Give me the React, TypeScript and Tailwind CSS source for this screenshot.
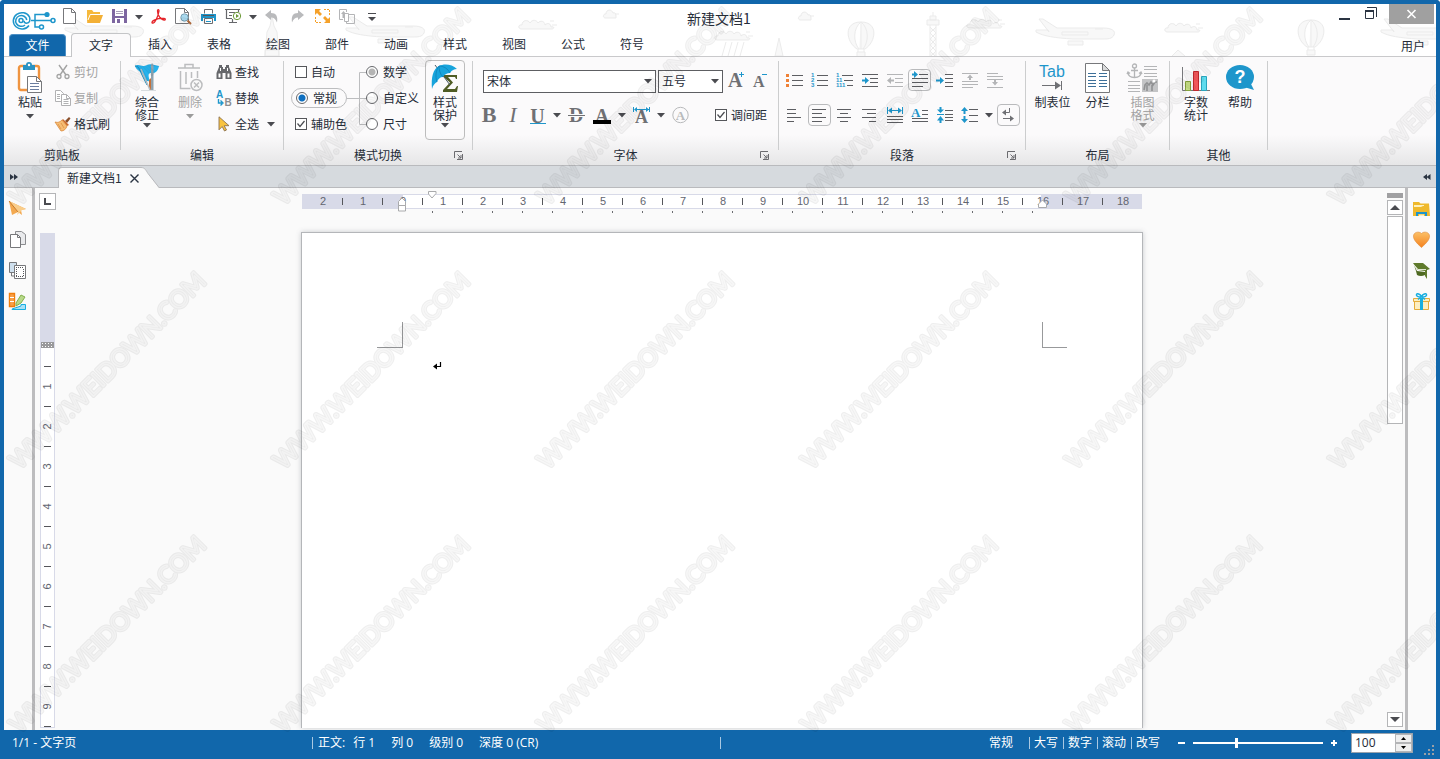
import React, { useState } from "react";

type Kids = { children?: React.ReactNode };

const GREY = "#6f7074";
const BLUE = "#1e96cb";

/* ---------- shared pieces ---------- */

function Svg({ w, h = w, children, className = "" }: Kids & { w: number; h?: number; className?: string }) {
  return (
    <svg width={w} height={h} viewBox={`0 0 ${w} ${h}`} fill="none" aria-hidden="true" className={`block shrink-0 overflow-visible ${className}`}>
      {children}
    </svg>
  );
}

function Caret({ color = "#4a4b50" }: { color?: string }) {
  return (
    <Svg w={8} h={6}>
      <path d="M0 1h8L4 5.500z" fill={color} />
    </Svg>
  );
}

function IconButton({ label, className = "w-[25px]", children }: Kids & { label: string; className?: string }) {
  return (
    <button type="button" aria-label={label} title={label} className={`flex h-[26px] shrink-0 items-center justify-center ${className}`}>
      {children}
    </button>
  );
}

function BigButton({
  icon,
  lines,
  caret,
  disabled,
  framed,
  className = "w-10",
}: {
  icon: React.ReactNode;
  lines: string[];
  caret?: boolean;
  disabled?: boolean;
  framed?: boolean;
  className?: string;
}) {
  return (
    <button
      type="button"
      disabled={disabled}
      className={`mt-[3px] flex h-20 shrink-0 flex-col items-center rounded border ${framed ? "border-[#bdbdbd]" : "border-transparent"} ${disabled ? "text-[#a3a3a3]" : ""} ${className}`}
    >
      <span className="flex h-[34px] items-center justify-center">{icon}</span>
      {lines.map((l) => (
        <span key={l} className="block leading-[13px] whitespace-nowrap">
          {l}
        </span>
      ))}
      {caret && (
        <span className={lines.length === 1 ? "mt-[5px]" : "mt-px"}>
          <Caret color={disabled ? "#9b9b9b" : undefined} />
        </span>
      )}
    </button>
  );
}

function SmallButton({ icon, label, disabled, caret }: { icon: React.ReactNode; label: string; disabled?: boolean; caret?: boolean }) {
  return (
    <button type="button" disabled={disabled} className={`flex h-[26px] items-center gap-[3px] whitespace-nowrap ${disabled ? "text-[#a3a3a3]" : ""}`}>
      {icon}
      {label}
      {caret && (
        <span className="ml-[5px]">
          <Caret />
        </span>
      )}
    </button>
  );
}

function Group({ label, width, launcher, children }: Kids & { label: string; width: string; launcher?: boolean }) {
  return (
    <>
      <section aria-label={label} className={`flex shrink-0 flex-col ${width}`}>
        <div className="flex h-[88px]">{children}</div>
        <div className="relative flex h-5 items-center justify-center">
          {label}
          {launcher && (
            <button type="button" aria-label={`${label} 设置`} className="absolute top-[6px] right-[9px]">
              <Svg w={9}>
                <path d="M.5 7V.5H8M8.500 3v5.500H3M3.500 3.500l3.500 3.500M7 4v3H4" stroke="#6b6b6f" />
              </Svg>
            </button>
          )}
        </div>
      </section>
      <div className="mt-1 mb-[15px] w-px shrink-0 bg-[#cccdce]" />
    </>
  );
}

function Check({ label, defaultChecked }: { label: string; defaultChecked?: boolean }) {
  return (
    <label className="flex h-[26px] items-center gap-1 whitespace-nowrap">
      <span className="grid size-[12px] shrink-0">
        <input type="checkbox" defaultChecked={defaultChecked} className="peer col-start-1 row-start-1 m-0 size-[12px] appearance-none border border-[#55565a] bg-white" />
        <svg viewBox="0 0 12 12" className="pointer-events-none col-start-1 row-start-1 hidden size-[12px] peer-checked:block" fill="none" aria-hidden="true">
          <path d="M2.500 5.500l2.500 3 4.500-5.500" stroke="#4a4b50" strokeWidth="1.200" />
        </svg>
      </span>
      {label}
    </label>
  );
}

function Radio({ label, name, defaultChecked, soft }: { label: string; name: string; defaultChecked?: boolean; soft?: boolean }) {
  return (
    <label className="flex items-center gap-[5px] whitespace-nowrap">
      <input
        type="radio"
        name={name}
        defaultChecked={defaultChecked}
        className={`m-0 size-3 shrink-0 appearance-none rounded-full border border-[#66676b] bg-white ${
          soft ? "checked:bg-[radial-gradient(circle,#b4b4b4_3px,#ffffff_4px)]" : "checked:bg-[radial-gradient(circle,#0f6fc0_3px,#ffffff_4px)]"
        }`}
      />
      {label}
    </label>
  );
}

function Serif({ children, className = "" }: Kids & { className?: string }) {
  return <span className={`font-['Liberation_Serif',serif] leading-none font-bold text-[#6f7074] ${className}`}>{children}</span>;
}

/* ---------- header ---------- */

function Cloud({ x, y, s = 1 }: { x: number; y: number; s?: number }) {
  return (
    <path
      transform={`translate(${x} ${y}) scale(${s})`}
      d="M2 10c-4-1-2-5 1-4 0-5 6-6 8-2 2-4 7-3 8 0 2-3 7-2 7 2 3-3 6-1 6 2 4-1 3 2 1 2zM31 2h4M33 6h5"
    />
  );
}

function Puff({ x, y }: { x: number; y: number }) {
  return <path transform={`translate(${x} ${y})`} d="M2 8c-3-1-1-5 1-4 0-5 6-5 7-1 3-1 3 2 3 5zM12 4h4" />;
}

function Plane({ x, y }: { x: number; y: number }) {
  return (
    <path
      transform={`translate(${x} ${y})`}
      d="M14 13L4 0h4l14 9h46c9 0 13 3 11 7s-6 4-12 4H38C20 19 8 17 1 13v-2h12zM27 13h26v3H27zM33 22h15v4H33zM60 10h8"
    />
  );
}

function Balloon({ x, y }: { x: number; y: number }) {
  return (
    <path
      transform={`translate(${x} ${y})`}
      d="M13 0c18 0 15 20 4 27h-8C-2 20-5 0 13 0zM13 0c-8 6-8 20-2 27M13 0c8 6 8 20 2 27M13 0v27M9 30h8v5H9zM10 27v3M16 27v3"
    />
  );
}

function Tower({ x }: { x: number }) {
  return <path transform={`translate(${x} 12)`} d="M6 0v4M3 4h6v4H3zM0 8h12v5H0zM3 13v31M9 13v31M3 15l6 6-6 6 6 6-6 6 6 6M9 15l-6 6 6 6-6 6 6 6-6 6" />;
}

function Doodles() {
  return (
    <svg className="pointer-events-none absolute top-0 -left-1 h-full w-[1440px]" viewBox="0 4 1440 52" preserveAspectRatio="xMinYMin slice" fill="#f8f8f8" stroke="#ebebeb" aria-hidden="true">
      <Plane x={64} y={17} />
      <Plane x={345} y={17} />
      <path d="M265 56l2-24 3-6 2-10 2 10 3 6 2 24zM265 56v-6h14v6M267 40h10" />
      <Cloud x={519} y={19} />
      <Puff x={603} y={10} />
      <Cloud x={715} y={30} />
      <path d="M726 42l-4 14M732 42l-4 14M738 42l-4 14M744 42l-4 14" fill="none" />
      <path d="M775 56l4-18 4 18z" />
      <Puff x={798} y={12} />
      <Balloon x={848} y={22} />
      <Tower x={927} />
      <Cloud x={967} y={18} />
      <Plane x={1035} y={19} />
      <Cloud x={1165} y={22} />
      <path d="M1172 56l6-6 7 6" />
      <Balloon x={1298} y={20} />
      <Plane x={1380} y={19} />
    </svg>
  );
}

function Logo() {
  return (
    <Svg w={44} h={19}>
      <g stroke="#1e96cb" strokeWidth="1.500">
        <path d="M17 14.500A8.600 8.200 0 1 1 17.500 6c1 3 .4 6.200-3 6.200-2 0-2.500-1-2.500-2.400" />
        <path d="M13 14a5.600 5.400 0 1 1 1.800-5" />
        <circle cx="9" cy="9.500" r="2" />
        <path d="M19 9.500h20M23 9.500V3.500h10M23 9.500v6.500h4" />
        <circle cx="41" cy="9.500" r="2" />
        <circle cx="29.500" cy="16" r="2" />
      </g>
      <circle cx="35" cy="3.500" r="2.600" fill="#1e96cb" />
    </Svg>
  );
}

const quick: [string, React.ReactNode, string?][] = [
  ["新建", <Svg w={15} h={18}><path d="M1.500.5h8l4 4v11h-12z" fill="#fff" stroke="#77787b" /><path d="M9.500.5v4h4" stroke="#77787b" /></Svg>],
  ["打开", <Svg w={17} h={14}><path d="M1 12V0h5l1.500 2H14v3" fill="#f6b93c" /><path d="M1 13L4 5h13l-3 8z" fill="#f3b035" /><path d="M2 10l2.200-5.500H15" stroke="#fff" /></Svg>],
  ["保存", <Svg w={15} h={16}><path d="M0 0h15v14H0z" fill="#7d66a0" /><path d="M3 0h9v7H3z" fill="#fff" /><path d="M4 2h7v1H4zM4 4h7v1H4z" fill="#a9a0b8" /><path d="M3 9h9v5H3z" fill="#fff" /><path d="M5 10h3v4H5z" fill="#7d66a0" /></Svg>],
  ["保存选项", <Caret />, "w-[14px]"],
  ["导出 PDF", <Svg w={15} h={16}><path d="M1 13.500c0-2 5-4.500 12-4 2 .2 1.500 1.700 0 1.500C10 10.500 6.500 7 6.500 2c0-2 1.700-1.500 1.500 0C7.500 6 4 14.500 1.700 14.200 1.200 14.200 1 14 1 13.500z" stroke="#e5252a" strokeWidth="1.300" /></Svg>],
  ["打印预览", <Svg w={17} h={18}><path d="M.5.5h9l4 4v11H.5z" fill="#fff" stroke="#77787b" /><path d="M9.500.5v4h4" stroke="#77787b" /><circle cx="9.500" cy="9.500" r="3.700" fill="#a9d9ee" stroke="#77a0b4" /><path d="M12.500 12.500l3.500 3.500" stroke="#b06a3b" strokeWidth="2" /></Svg>],
  ["打印", <Svg w={15} h={16}><path d="M3.500 4.500v-4h8v4" fill="#fff" stroke="#6c6d70" /><path d="M0 5h15v7h-2V9H2v3H0z" fill={BLUE} /><path d="M2 6h11v1H2z" fill="#55565a" /><path d="M3.500 9.500h8v5h-8z" fill="#fff" stroke="#6c6d70" /><path d="M5 12.500h5" stroke={BLUE} /></Svg>],
  ["演示", <Svg w={17} h={16}><path d="M0 .5h15M1.500 1v8.500H7M13.500 1v2M4 3.500h6M4 6.500h3M7.500 10v3M4 13.500h8" stroke="#66676b" strokeWidth="1.200" /><circle cx="12" cy="7" r="3.700" fill="#fff" stroke="#6d9a3a" /><path d="M11 5l3 2-3 2z" fill="#6d9a3a" /></Svg>],
  ["演示选项", <Caret />, "w-[14px]"],
  ["撤销", <Svg w={15} h={14}><path d="M0 5l6-5v3c5 0 7 3 6 9.500C10.500 9 9 7.500 6 7.500V10z" fill="#b9babc" /></Svg>],
  ["重做", <Svg w={15} h={14}><path d="M14 5L8 0v3C3 3 1 6 2 12.500 3.500 9 5 7.500 8 7.500V10z" fill="#b9babc" /></Svg>],
  ["全屏", <Svg w={15} h={16}><path d="M0 0h6L4 2l3 3-2 2-3-3-2 2zM15 14H9l2-2-3-3 2-2 3 3 2-2z" fill="#f5a12a" /><path d="M9 .5h5.500V6M.5 8v5.500H6" stroke="#f5a12a" strokeDasharray="2 1" /></Svg>],
  ["粘贴选项", <Svg w={17} h={16}><path d="M4 10.500H.5v-10h7V3M5.500 4.500v8h4v-8zM9.500 5.500h6v9h-8V12" stroke="#b4b5b7" /><path d="M2 5l2.500-3L7 5H5.500v4h-2V5z" fill="#b4b5b7" /></Svg>],
  ["自定义快速访问栏", <Svg w={9} h={10}><path d="M0 1.500h8" stroke="#4a4b50" /><path d="M0 5h8L4 9z" fill="#4a4b50" /></Svg>],
];

function Header() {
  const tabs = ["插入", "表格", "绘图", "部件", "动画", "样式", "视图", "公式", "符号"];
  return (
    <header className="relative bg-white">
      <Doodles />
      <div className="relative flex h-[29px]">
        <div className="flex flex-1 basis-0 items-start">
          <div className="w-[53px] pt-[7px] pl-2">
            <Logo />
          </div>
          {quick.map(([label, icon, w]) => (
            <IconButton key={label} label={label} className={w}>
              {icon}
            </IconButton>
          ))}
        </div>
        <h1 className="self-center pb-px text-sm leading-5">新建文档1</h1>
        <div className="flex flex-1 basis-0 items-start justify-end pr-[2px]">
          <IconButton label="最小化">
            <Svg w={11} h={12}><path d="M0 7h11v2H0z" fill="#2a3442" /></Svg>
          </IconButton>
          <IconButton label="还原" className="w-7">
            <Svg w={14} className="-mt-2"><path d="M3 1.500h9.500V11" stroke="#2a3442" /><path d="M1.500 4.500h8v8h-8z" stroke="#2a3442" /><path d="M1 4h9v2H1z" fill="#2a3442" /></Svg>
          </IconButton>
          <button type="button" aria-label="关闭" className="ml-1 flex h-5 w-[45px] items-center justify-center bg-[#a0a0a0]">
            <Svg w={9} h={10}><path d="M.5 1l8 8M8.500 1l-8 8" stroke="#fff" strokeWidth="1.600" /></Svg>
          </button>
        </div>
      </div>
      <nav className="relative flex h-[23px] pl-[5px]">
        <button type="button" className="mt-px mr-[5px] flex w-[57px] items-center justify-center rounded-t border-x border-t border-[#4d8fc4] bg-[#1167ab] pb-px text-white">文件</button>
        <button type="button" aria-current="page" className="z-10 -mb-px flex w-[60px] items-center justify-center rounded-t border-x border-t border-[#c4c5c7] bg-[#fbfafb] pb-[2px]">文字</button>
        {tabs.map((t) => (
          <button key={t} type="button" className="flex w-[59px] items-center justify-center pr-px pb-px">
            {t}
          </button>
        ))}
        <button type="button" className="mt-[3px] mr-[11px] ml-auto">用户</button>
      </nav>
    </header>
  );
}

/* ---------- ribbon icons ---------- */

const pasteIcon = (
  <Svg w={26} h={32}>
    <rect x="2" y="4" width="20" height="24" rx="2" fill="#fff" stroke="#ef9440" strokeWidth="2.400" />
    <path d="M6 3h3a3 3 0 0 1 6 0h3v5H6z" fill="#2a93c4" />
    <circle cx="12" cy="3" r="1.200" fill="#fff" />
    <path d="M10.500 14.500h9l5 5v11h-14z" fill="#fff" stroke="#77787b" />
    <path d="M19.500 14.500v5h5" stroke="#77787b" />
    <path d="M13 21.500h9M13 24.500h9M13 27.500h9" stroke="#6b7ea0" />
  </Svg>
);

const flagIcon = (
  <Svg w={26} h={30}>
    <path d="M1 3c5-3 6 2 12-1 3-2 8 0 12 1-1 6-5 8-8 7-4 0-2 5-1 8-5 1-6-3-7-6C7 8 3 8 1 3z" fill="#25b3ee" />
    <path d="M1 3c4 0 4 3 7 9l5 10" stroke="#1489bd" />
    <path d="M15 17l2-2h2v13h-4z" fill="#c4713a" />
    <path d="M17 2l1-2 1.500 2v26H17z" fill="#8fa3b0" />
    <path d="M7 6l9 21" stroke="#b4bec5" strokeWidth="1.500" />
    <path d="M7 27.500h15" stroke="#d8dcdf" />
  </Svg>
);

const trashIcon = (
  <Svg w={26} h={30}>
    <g stroke="#bcbdbf" strokeWidth="1.500">
      <path d="M1 5h22M8 5V1.500h8V5M3.500 8v17.500h10M20.500 8v7M9 9v12M14.500 9v6" />
      <circle cx="19.500" cy="22" r="5.500" fill="#fafafa" />
      <path d="M17 19.500l5 5M22 19.500l-5 5" />
    </g>
  </Svg>
);

const umbrellaIcon = (
  <Svg w={30} h={32}>
    <path d="M13 13h14v4h-1l-1-2h-7l5 5.500-6 6.500h8l2-3h1l-1 6H13v-2l7-7.500-7-6z" fill="#4f5c24" />
    <path d="M5 3l15 20" stroke="#4a5a66" />
    <path d="M2 27C1 15 3 7 9 4c5-2.500 13-2 18 3-3 0-5 1-7 4-3 0-5 1-7 4-3 0-5 2-6 5-2 1-4 3-5 7z" fill="#18a4dc" />
    <path d="M20 11C18 7 14 4 9 4c0 4 1 8 4 11M7 20C5 14 6 8 9 4" stroke="#0d82b8" strokeWidth=".8" />
  </Svg>
);

const tabIcon = (
  <Svg w={31} h={30}>
    <text x="15" y="14" textAnchor="middle" fontFamily="Liberation Sans, sans-serif" fontSize="16" fill={BLUE}>Tab</text>
    <path d="M5 22.500h16" stroke={GREY} />
    <path d="M18 18.500l6 4-6 4z" fill={GREY} />
    <path d="M24.500 18v9" stroke={GREY} />
  </Svg>
);

const columnsIcon = (
  <Svg w={25} h={30}>
    <path d="M.5.5h17l7 7v22H.5z" fill="#fff" stroke="#77787b" />
    <path d="M17.500.5v7h7z" fill="#d9dadb" stroke="#77787b" />
    <path d="M3 10.500h8M3 13.500h8M3 17.500h8M3 20.500h8M3 23.500h8M14 10.500h8M14 13.500h8M14 17.500h8M14 20.500h8M14 23.500h8" stroke="#3c6f99" />
  </Svg>
);

const anchorIcon = (
  <Svg w={31} h={30}>
    <g stroke="#b4b5b7" strokeWidth="1.300">
      <circle cx="7.500" cy="3" r="2" />
      <path d="M7.500 5v9M4 7.500h7M1 9c0 4 3 5.500 6.500 5.500S14 13 14 9M0 11l1-2 2 1.500M15 11l-1-2-2 1.500" />
    </g>
    <path d="M17 3.500h13M17 6.500h13M17 10.500h13M17 13.500h13M1 18.500h12M1 22.500h12M1 25.500h12M1 28.500h12" stroke="#b4b5b7" />
    <path d="M15 16h16v13H15z" fill="#c3c4c6" />
    <path d="M17 27l1-5 2-2 2 2 2-3 2 3 2-3h2M20 22v6M25 22v6" stroke="#909193" strokeWidth="1.600" />
    <circle cx="27" cy="18" r="1.500" fill="#fff" />
  </Svg>
);

const chartIcon = (
  <Svg w={28} h={28}>
    <path d="M.5 3v23.500H28" stroke="#77787b" />
    <path d="M3.500 17.500h5v9h-5z" fill="#c5dd84" stroke="#86a33c" />
    <path d="M11.500 7.500h5v19h-5z" fill="#f2575a" stroke="#c2282d" />
    <path d="M19.500 12.500h5v14h-5z" fill="#5fdcee" stroke="#2aa5be" />
  </Svg>
);

const helpIcon = (
  <Svg w={28}>
    <ellipse cx="14" cy="13" rx="14" ry="12" fill={BLUE} />
    <path d="M18 23l10 3-4-8z" fill={BLUE} />
    <text x="14" y="19" textAnchor="middle" fontFamily="Liberation Sans, sans-serif" fontWeight="bold" fontSize="18" fill="#fff">?</text>
  </Svg>
);

const scissors = (
  <Svg w={16}><path d="M4 1l7 10M12 1L5 11" stroke="#a3a3a3" strokeWidth="1.400" /><circle cx="4" cy="12.500" r="2" stroke="#a3a3a3" strokeWidth="1.300" /><circle cx="12" cy="12.500" r="2" stroke="#a3a3a3" strokeWidth="1.300" /></Svg>
);
const copy = (
  <Svg w={16}><path d="M.5.500h5l3 3v8h-8z" fill="#fff" stroke="#b1b1b3" /><path d="M6.500 4.500h5l4 4v7h-9z" fill="#fff" stroke="#b1b1b3" /><path d="M2 4.500h3M2 6.500h3M2 8.500h3M8.500 9.500h5M8.500 11.500h5M8.500 13.500h5M11.500 4.500v4h4" stroke="#b1b1b3" /></Svg>
);
const brush = (
  <Svg w={16}><path d="M10 5l4-4 1.500 1.500L12 7z" fill="#8a4f2b" /><path d="M8 3l6 6-2 1-5-6z" fill="#c9692c" /><path d="M7 4l5 6c-1 3-3 5-6 5L0 6c3 1 5 0 7-2z" fill="#f6bd74" stroke="#d98a3d" strokeWidth=".8" /><path d="M3 8l3 5M6 7l3 5" stroke="#d98a3d" strokeWidth=".7" /></Svg>
);
const binoculars = (
  <Svg w={16}><path d="M3 1h3v2h1v2h2V3h1V1h3v2l2.500 6v6H9.500V9h-3v6H.5V9L3 3z" fill="#66676b" /><path d="M2.500 9.500h2v4h-2zM11.500 9.500h2v4h-2zM4 4h1v3H4zM11 4h1v3h-1z" fill="#fff" /></Svg>
);
const replace = (
  <Svg w={16}>
    <text x="0" y="8" fontFamily="Liberation Sans, sans-serif" fontWeight="bold" fontSize="10" fill={BLUE}>A</text>
    <text x="8.500" y="15.500" fontFamily="Liberation Sans, sans-serif" fontWeight="bold" fontSize="10" fill="#8b8c8f">B</text>
    <path d="M2.500 9v4H6M4.500 10.500L7 13l-2.500 2.500" stroke={BLUE} strokeWidth="1.400" />
  </Svg>
);
const pointer = (
  <Svg w={16}><path d="M3 .8v13l3.200-3.300L8.500 15l2-1-2.300-4.300H13z" fill="#f9c440" stroke="#8d7350" strokeWidth=".9" /></Svg>
);

/* Paragraph glyphs share a 17x18 box with strokes on whole pixels. */
function Para({ d, soft, children }: Kids & { d: string; soft?: boolean }) {
  return (
    <Svg w={17} h={18}>
      <path d={d} stroke={soft ? "#b4b5b7" : "#5d5e62"} />
      {children}
    </Svg>
  );
}

const numText = (rows: string[]) =>
  rows.map((r, i) => (
    <text key={r} x="0" y={6 + i * 5} fontFamily="Liberation Sans, sans-serif" fontWeight="bold" fontSize="6" fill={BLUE}>
      {r}
    </text>
  ));

const paraTop: [string, React.ReactNode, boolean?][] = [
  ["项目符号", <Para d="M6 4.500h11M6 9.500h11M6 14.500h11"><path d="M0 3h3v3H0zM0 8h3v3H0zM0 13h3v3H0z" fill="#ef8136" /></Para>],
  ["编号", <Para d="M6 4.500h11M6 9.500h11M6 14.500h11">{numText(["1", "2", "3"])}</Para>],
  ["多级编号", <Para d="M6 4.500h11M8 9.500h9M11 14.500h6">{numText(["1", "11", "111"])}</Para>],
  ["增加缩进", <Para d="M1 3.500h16M9 7.500h8M9 11.500h8M1 15.500h16"><path d="M1 8.500h3V6l4 3.500L4 13v-2.500H1z" fill={BLUE} /></Para>],
  ["减少缩进", <Para soft d="M1 3.500h16M9 7.500h8M9 11.500h8M1 15.500h16"><path d="M8 8.500H5V6L1 9.500 5 13v-2.500h3z" fill="#b4b5b7" /></Para>],
  ["首行缩进", <Para d="M8 3.500h9M1 7.500h16M1 11.500h16M1 15.500h11"><path d="M1 2.500h2V0l4 3.500L3 7V4.500H1z" fill={BLUE} /></Para>, true],
  ["悬挂缩进", <Para d="M9 3.500h8M9 7.500h8M9 11.500h8M9 15.500h8"><path d="M0 8.500h4V6l4 3.500L4 13v-2.500H0z" fill={BLUE} /></Para>],
  ["段前间距", <Para soft d="M1 2.500h16M1 10.500h16M1 13.500h16M1 16.500h11"><path d="M8 9V7H6l3-3.500L12 7h-2v2z" fill="#b4b5b7" /></Para>],
  ["段后间距", <Para soft d="M1 2.500h11M1 5.500h16M1 8.500h16M1 16.500h16"><path d="M8 9v2H6l3 3.500 3-3.500h-2V9z" fill="#b4b5b7" /></Para>],
];

const paraBottom: [string, React.ReactNode, boolean?][] = [
  ["左对齐", <Para d="M1 3.500h9M1 7.500h9M1 11.500h14M1 15.500h7" />],
  ["两端对齐", <Para d="M1 3.500h14M1 7.500h10M1 11.500h14M1 15.500h10" />, true],
  ["居中", <Para d="M1 3.500h14M4 7.500h8M1 11.500h14M4 15.500h8" />],
  ["右对齐", <Para d="M1 3.500h14M6 7.500h9M1 11.500h14M8 15.500h7" />],
  ["分散对齐", <Para d="M1 10.500h16M1 13.500h16M1 16.500h16"><path d="M1.500 1v7M16.500 1v7" stroke={BLUE} /><path d="M2 4.500L6 1.500V4h6V1.500l4 3-4 3V5H6v2.500z" fill={BLUE} /></Para>],
  ["首字下沉", <Para d="M11 4.500h6M11 8.500h6M1 12.500h16M1 15.500h16"><text x="0" y="11" fontFamily="Liberation Serif, serif" fontWeight="bold" fontSize="13" fill={BLUE}>A</text></Para>],
  ["段距", <Para d="M9 4.500h8M9 8.500h8M9 11.500h8M9 14.500h8"><path d="M1 8.500h7" stroke={BLUE} /><path d="M3.500 1h2v2.500H8L4.500 7 1 3.500h2.500zM3.500 17h2v-2.500H8L4.500 10 1 14.500h2.500z" fill={BLUE} /></Para>],
  ["行距", <Para d="M8 3.500h9M8 9.500h9M8 15.500h9"><path d="M2.500 8V5H0l3.500-4L7 5H4.500v3zM2.500 10v3H0l3.500 4L7 13H4.500v-3z" fill={BLUE} /></Para>],
];

function ParaButton({ label, icon, on }: { label: string; icon: React.ReactNode; on?: boolean }) {
  return (
    <IconButton label={label}>
      <span className={`flex h-[22px] w-[23px] items-center justify-center rounded-sm border ${on ? "border-[#b9babc]" : "border-transparent"}`}>{icon}</span>
    </IconButton>
  );
}

function Dropdown({ label, options, className }: { label: string; options: string[]; className: string }) {
  return (
    <div className={`relative self-end ${className}`}>
      <select aria-label={label} className="block h-[23px] w-full appearance-none border border-[#5d5e62] bg-white pb-px pl-[3px] leading-5 outline-none">
        {options.map((o) => (
          <option key={o}>{o}</option>
        ))}
      </select>
      <span className="pointer-events-none absolute top-[8px] right-1">
        <Caret />
      </span>
    </div>
  );
}

function Ribbon() {
  return (
    <div className="flex overflow-hidden border-y border-t-[#c9c9cb] border-b-[#b9babd] bg-[linear-gradient(#fbfafb_0_72%,#e6e6e7)]">
      <Group label="剪贴板" width="w-[116px]">
        <BigButton className="ml-[6px] w-10" icon={pasteIcon} lines={["粘贴"]} caret />
        <div className="ml-[5px] flex flex-col items-start pt-[2px]">
          <SmallButton icon={scissors} label="剪切" disabled />
          <SmallButton icon={copy} label="复制" disabled />
          <SmallButton icon={brush} label="格式刷" />
        </div>
      </Group>

      <Group label="编辑" width="w-[162px]">
        <BigButton className="ml-[6px] w-10" icon={flagIcon} lines={["综合", "修正"]} caret />
        <BigButton className="ml-[3px] w-10" icon={trashIcon} lines={["删除"]} caret disabled />
        <div className="ml-[6px] flex flex-col items-start pt-[2px]">
          <SmallButton icon={binoculars} label="查找" />
          <SmallButton icon={replace} label="替换" />
          <SmallButton icon={pointer} label="全选" caret />
        </div>
      </Group>

      <Group label="模式切换" width="w-[188px]" launcher>
        <div className="ml-[7px] w-14 pt-[2px]">
          <div className="pl-1">
            <Check label="自动" />
          </div>
          <div className="my-[3px] flex h-5 items-center rounded-full border border-[#bcbdbf] pl-1">
            <Radio name="mode" label="常规" defaultChecked />
          </div>
          <div className="pl-1">
            <Check label="辅助色" defaultChecked />
          </div>
        </div>
        <Svg w={19} h={82}>
          <path d="M0 41.500h19M19 15.500h-6.500v52H19" stroke="#bcbdbf" />
        </Svg>
        <div className="flex w-[59px] flex-col pt-[2px]">
          {["数学", "自定义", "尺寸"].map((l, i) => (
            <div key={l} className="flex h-[26px] items-center">
              <Radio name="kind" label={l} defaultChecked={i === 0} soft />
            </div>
          ))}
        </div>
        <BigButton className="w-10" icon={umbrellaIcon} lines={["样式", "保护"]} caret framed />
      </Group>

      <Group label="字体" width="w-[305px]" launcher>
        <div className="flex flex-col gap-[9px] pt-[10px] pl-1">
          <div className="flex h-[26px] items-center pl-[6px]">
            <Dropdown label="字体" options={["宋体", "黑体", "楷体"]} className="mr-[2px] w-[173px]" />
            <Dropdown label="字号" options={["五号", "四号", "小五"]} className="w-[65px]" />
            <IconButton label="增大字号" className="ml-px w-[25px]">
              <Svg w={19} h={18}>
                <text x="1" y="16" fontFamily="Liberation Serif, serif" fontWeight="bold" fontSize="20" fill={GREY}>A</text>
                <path d="M12 3.500h5M14.500 1v5" stroke={BLUE} />
              </Svg>
            </IconButton>
            <IconButton label="减小字号">
              <Svg w={17} h={18}>
                <text x="0" y="16" fontFamily="Liberation Serif, serif" fontWeight="bold" fontSize="16" fill={GREY}>A</text>
                <path d="M9 3.500h5" stroke={BLUE} />
              </Svg>
            </IconButton>
          </div>
          <div className="flex h-[26px] items-center">
            <IconButton label="加粗" className="w-6"><Serif className="text-[22px]">B</Serif></IconButton>
            <IconButton label="倾斜" className="w-6"><Serif className="text-[22px] font-normal italic">I</Serif></IconButton>
            <IconButton label="下划线">
              <span className="flex flex-col items-center">
                <Serif className="h-4 text-xl leading-4">U</Serif>
                <span className="mt-px h-px w-4 bg-[#1e96cb]" />
              </span>
            </IconButton>
            <IconButton label="下划线选项" className="w-[14px]"><Caret /></IconButton>
            <IconButton label="删除线">
              <Svg w={17} h={18}>
                <text x="1" y="16" fontFamily="Liberation Serif, serif" fontWeight="bold" fontSize="20" fill={GREY}>D</text>
                <path d="M0 9.500h17" stroke="#fafafa" strokeWidth="3" />
                <path d="M0 9.500h17" stroke={GREY} />
              </Svg>
            </IconButton>
            <IconButton label="字体颜色" className="w-[26px]">
              <span className="flex flex-col items-center">
                <Serif className="h-[14px] text-xl leading-[14px]">A</Serif>
                <span className="h-1 w-[18px] bg-black" />
              </span>
            </IconButton>
            <IconButton label="字体颜色选项" className="w-[14px]"><Caret /></IconButton>
            <IconButton label="字符间距">
              <Svg w={17} h={18}>
                <text x="2" y="17" fontFamily="Liberation Serif, serif" fontWeight="bold" fontSize="18" fill={GREY}>A</text>
                <path d="M.5 1v5M16.500 1v5M2 3.500h14" stroke={BLUE} />
                <path d="M1 3.500l3-2.500v5zM16 3.500L13 1v5z" fill={BLUE} />
              </Svg>
            </IconButton>
            <IconButton label="字符间距选项" className="w-[14px]"><Caret /></IconButton>
            <IconButton label="字符边框">
              <Svg w={17} h={18}>
                <circle cx="8.500" cy="9" r="7.700" stroke="#b9babc" />
                <text x="8.500" y="14" textAnchor="middle" fontFamily="Liberation Serif, serif" fontWeight="bold" fontSize="13" fill="#b9babc">A</text>
              </Svg>
            </IconButton>
            <span className="ml-[22px]">
              <Check label="调间距" defaultChecked />
            </span>
          </div>
        </div>
      </Group>

      <Group label="段落" width="w-[246px]" launcher>
        <div className="flex flex-col gap-[9px] pt-[10px] pl-[3px]">
          <div className="flex">
            {paraTop.map(([l, icon, on]) => (
              <ParaButton key={l} label={l} icon={icon} on={on} />
            ))}
          </div>
          <div className="flex">
            {paraBottom.map(([l, icon, on]) => (
              <ParaButton key={l} label={l} icon={icon} on={on} />
            ))}
            <IconButton label="行距选项" className="w-[14px]"><Caret /></IconButton>
            <ParaButton
              label="换行标记"
              on
              icon={<Svg w={17} h={18}><path d="M9.500 2v4.500H5M3 12.500h8" stroke={GREY} /><path d="M6 3.500v6l-4-3zM10 9.500v6l4-3z" fill={GREY} /></Svg>}
            />
          </div>
        </div>
      </Group>

      <Group label="布局" width="w-[143px]">
        <BigButton className="ml-1 w-[45px]" icon={tabIcon} lines={["制表位"]} />
        <BigButton className="w-[45px]" icon={columnsIcon} lines={["分栏"]} />
        <BigButton className="w-[45px]" icon={anchorIcon} lines={["插图", "格式"]} caret disabled />
      </Group>

      <Group label="其他" width="w-[97px]">
        <BigButton className="ml-1 w-11" icon={chartIcon} lines={["字数", "统计"]} />
        <BigButton className="w-11" icon={helpIcon} lines={["帮助"]} />
      </Group>
    </div>
  );
}

/* ---------- document area ---------- */

function DocTabs() {
  return (
    <div className="flex h-[22px] items-stretch border-b border-[#b9babd] bg-[#d6dade]">
      <button type="button" aria-label="展开左侧栏" className="flex w-[54px] items-center pl-[6px]">
        <Svg w={8} h={6}><path d="M0 0l4 3-4 3zM4 0l4 3-4 3z" fill="#2a3442" /></Svg>
      </button>
      <div className="relative mt-px -mb-px flex items-center gap-[8px] rounded-tl border-t border-l border-[#b9babd] bg-[#fafafa] pl-2">
        <span className="leading-none">新建文档1</span>
        <button type="button" aria-label="关闭文档">
          <Svg w={9}><path d="M.5.5l8 8M8.500.5l-8 8" stroke="#2a3442" strokeWidth="1.400" /></Svg>
        </button>
      </div>
      <svg width="21" height="21" viewBox="0 0 21 21" className="mt-px -mb-px shrink-0" aria-hidden="true">
        <path d="M0 21V.5h2c4 0 5 3 7 6l11 14.500z" fill="#fafafa" />
        <path d="M0 .5h2c4 0 5 3 7 6L20 20.500" fill="none" stroke="#b9babd" />
      </svg>
      <button type="button" aria-label="展开右侧栏" className="mr-[6px] ml-auto flex items-center">
        <Svg w={7} h={6}><path d="M4 0L0 3l4 3zM7.500 0l-4 3 4 3z" fill="#2a3442" /></Svg>
      </button>
    </div>
  );
}

const leftTools: [string, React.ReactNode][] = [
  ["发送", <Svg w={17} h={15}><path d="M0 0l17 8-5 1 1 5-4-3-6 3z" fill="#f3a950" /><path d="M0 0l9 11-1 3 5-5 4-1z" fill="#f9cd8a" /><path d="M0 0l9 11" stroke="#c97b2c" /></Svg>],
  ["页面", <Svg w={16} h={17}><path d="M5.500.5h6l4 3v10h-10z" fill="#e9eaec" stroke="#8b8c8f" /><path d="M.5 3.500h7l3 3v10H.5z" fill="#fff" stroke="#77787b" /><path d="M7.500 3.500v3h3" stroke="#77787b" /></Svg>],
  ["样式", <Svg w={17}><path d="M.5.5h7v10h-7z" fill="#cfe0ee" stroke="#77787b" /><path d="M2.500 10v4H6" stroke="#77787b" /><path d="M5.500 3.500h11v13h-11z" fill="#fff" stroke="#77787b" /><path d="M7 5.500h8M7 14.500h8M7.500 7v7M14.500 7v7" stroke="#55565a" strokeDasharray="1 1" /></Svg>],
  ["配色", <Svg w={17}><path d="M.5.500h5v13h-5z" fill="#f8a04b" stroke="#ef7d0c" strokeWidth="1.400" /><path d="M1 4.500h4M1 8.500h4" stroke="#fff" /><path d="M7 10l5-8 4 2-4 6-5 3z" fill="#b8d98a" stroke="#83b04d" /><path d="M3 16l9-3v-1.500h4.500v5H3z" fill="#a9e0f5" stroke="#17aee2" /></Svg>],
];

const rightTools: [string, React.ReactNode][] = [
  ["资源库", <Svg w={17} h={16}><path d="M0 15V1h6l1.500 1.500H16L17 15z" fill="#efb92c" /><path d="M1 4h10v1h-1L8 6H1z" fill="#fdf1bf" /><path d="M3 15v-4h11v4h-2v-2H5v2z" fill={BLUE} /><path d="M6 13.500h5V15H6z" fill="#fdf1bf" /></Svg>],
  ["收藏", <Svg w={17}><defs><linearGradient id="heart" x2="0" y2="1"><stop stopColor="#fbc066" /><stop offset="1" stopColor="#f5821f" /></linearGradient></defs><path d="M8.500 16.500C3 11.500.5 8.500.5 5.200.5 1 6 0 8.500 2.500 11 0 16.500 1 16.500 5.200c0 3.300-2.500 6.300-8 11.300z" fill="url(#heart)" stroke="#e39243" strokeWidth=".7" /></Svg>],
  ["学习", <Svg w={17}><path d="M0 1h10l7 6-3 1v9l-2-3V9L5 8z" fill="#5f7a2c" /><path d="M1 3l3 6 8 1v3c-3 1.500-6 1-8 0L3 9z" fill="#4f6a22" /><path d="M1 3l4 4.500h8" stroke="#dfe6cf" /></Svg>],
  ["礼物", <Svg w={17}><path d="M.5 5.500h16v3h-16zM1.500 8.500h14v8h-14z" fill="#fdeec0" stroke="#e5ac3a" /><path d="M7 5h3v12H7z" fill="#18aee0" /><path d="M8 4C5 4 3 3 3.500 1.500S7 1 8.500 3.500C10 1 13 0 13.500 1.500S12 4 9 4l3 2.500M8 4L5 6.500" stroke="#18aee0" strokeWidth="1.500" /></Svg>],
];

function ToolStrip({ items }: { items: [string, React.ReactNode][] }) {
  return (
    <aside className="flex w-7 shrink-0 flex-col items-center pt-[5px]">
      {items.map(([l, icon]) => (
        <button key={l} type="button" aria-label={l} title={l} className="flex h-[31px] w-[27px] items-center justify-center self-start">
          {icon}
        </button>
      ))}
    </aside>
  );
}

function HorizontalRuler() {
  return (
    <div className="relative mt-[6px] h-[38px] w-[840px] shrink-0">
      <div className="relative h-[15px] bg-[#d8dae8]">
        <div className="absolute inset-y-px left-[101px] w-[638px] bg-white" />
        <div className="relative flex h-full items-center pl-[11px] font-['Liberation_Sans',sans-serif] text-[11px] leading-none text-[#62656f]">
          {Array.from({ length: 41 }, (_, i) =>
            i % 2 ? (
              <span key={i} className="w-5 pl-[9px]"><span className="block h-[7px] w-px bg-[#55565a]" /></span>
            ) : (
              <span key={i} className="w-5 text-center">{Math.abs(i / 2 - 2)}</span>
            )
          )}
        </div>
      </div>
      <div className="flex gap-[29px] pt-[2px] pl-[130px]">
        {Array.from({ length: 21 }, (_, i) => (
          <span key={i} className="h-[2px] w-px bg-[#6b6c70]" />
        ))}
      </div>
      <svg className="absolute -top-1 left-[95px] h-[22px] w-[10px]" viewBox="0 0 10 22" fill="#fff" stroke="#a9aaac" aria-hidden="true">
        <path d="M1.500 15.500v-4L5 8l3.500 3.500v4zM1.500 15.500h7V21h-7z" />
      </svg>
      <svg className="absolute -top-1 left-[125px] h-[10px] w-[10px]" viewBox="0 0 10 10" fill="#fff" stroke="#a9aaac" aria-hidden="true">
        <path d="M1.500 1.500h7.500v2L5 8 1.500 4z" />
      </svg>
      <svg className="absolute top-1 left-[735px] h-[11px] w-[11px]" viewBox="0 0 11 11" fill="#fff" stroke="#a9aaac" aria-hidden="true">
        <path d="M1.500 9.500V6l4-4 4 4v3.500z" />
      </svg>
    </div>
  );
}

function VerticalRuler() {
  return (
    <div className="flex w-[22px] shrink-0 flex-col pt-[5px] pl-1">
      <button type="button" aria-label="制表符类型" className="flex size-[17px] shrink-0 items-center justify-center border border-[#b4b5b7] bg-white">
        <span className="size-[7px] border-b-2 border-l-2 border-[#4a4b50]" />
      </button>
      <div className="mt-[23px] mb-[2px] ml-px flex min-h-0 w-[15px] flex-1 flex-col overflow-hidden border-x border-b border-[#d8dae8] bg-white">
        <div className="h-[109px] shrink-0 bg-[#d8dae8]" />
        <div className="h-[6px] shrink-0 bg-[#99999b] bg-[radial-gradient(#ffffff_1px,transparent_1px)] bg-[size:3px_3px]" />
        <div className="mt-2 flex flex-col font-['Liberation_Sans',sans-serif] text-[11px] leading-none text-[#62656f]">
          {Array.from({ length: 19 }, (_, i) => (
            <span key={i} className="flex h-5 shrink-0 items-center justify-center">
              {i % 2 ? <span className="-rotate-90">{(i + 1) / 2}</span> : <span className="h-px w-[7px] bg-[#55565a]" />}
            </span>
          ))}
        </div>
      </div>
    </div>
  );
}

function Page() {
  return (
    <div className="mb-[2px] min-h-0 w-[842px] flex-1 border-x border-t border-[#b4b6b9] bg-white pt-[89px] shadow-[0_0_5px_rgba(90,95,105,0.3)]">
      <div className="flex h-[26px] justify-between px-[75px]">
        <div className="w-[26px] border-r border-b border-[#98999b]" />
        <div className="w-[25px] border-b border-l border-[#98999b]" />
      </div>
      <div className="mt-[14px] pl-[131px]">
        <Svg w={8} h={8}><path d="M7.500 0v4.500H3" stroke="#000" strokeWidth="1.200" /><path d="M4 1.500v6L0 4.500z" fill="#000" /></Svg>
      </div>
    </div>
  );
}

function ScrollBar() {
  return (
    <div className="flex w-[18px] shrink-0 flex-col pt-[5px] pr-[2px] pb-[3px]">
      <div className="h-[5px] shrink-0 bg-[#a0a0a2]" />
      <button type="button" aria-label="向上滚动" className="mt-[2px] flex h-[15px] shrink-0 items-center justify-center border border-[#b4b5b7] bg-white">
        <Svg w={10} h={5}><path d="M0 5l5-5 5 5z" fill="#4a4b50" /></Svg>
      </button>
      <div className="mt-px min-h-0 flex-1">
        <div className="h-[42%] border border-[#b4b5b7] bg-white" />
      </div>
      <button type="button" aria-label="向下滚动" className="flex h-[15px] shrink-0 items-center justify-center border border-[#b4b5b7] bg-white">
        <Svg w={10} h={5}><path d="M0 0l5 5 5-5z" fill="#4a4b50" /></Svg>
      </button>
    </div>
  );
}

/* ---------- status bar ---------- */

function StatusBar() {
  const [zoom, setZoom] = useState(100);
  return (
    <footer className="-mx-1 flex h-[29px] shrink-0 items-center bg-[#1167ab] pb-1 font-['Open_Sans','Noto_Sans_CJK_SC',sans-serif] whitespace-nowrap text-white">
      <span className="w-[312px] pl-3">1/1 - 文字页</span>
      <div className="flex h-3 flex-1 items-center gap-4 border-l border-[#a9c8e2] pl-[5px]">
        <span className="flex gap-2"><span>正文:</span><span>行 1</span></span>
        <span>列 0</span>
        <span>级别 0</span>
        <span>深度 0 (CR)</span>
      </div>
      <div className="h-3 w-[269px] border-l border-[#a9c8e2]" />
      <span className="w-10">常规</span>
      {["大写", "数字", "滚动", "改写"].map((s) => (
        <span key={s} className="w-[34px] border-l border-[#a9c8e2] pl-1 leading-3">
          {s}
        </span>
      ))}
      <button type="button" aria-label="缩小" className="ml-[13px] flex h-4 w-[7px] items-center" onClick={() => setZoom(Math.max(20, zoom - 10))}>
        <Svg w={7} h={2}><path d="M0 0h7v2H0z" fill="#fff" /></Svg>
      </button>
      <input
        type="range"
        aria-label="显示比例"
        min={20}
        max={260}
        value={zoom}
        onChange={(e) => setZoom(Number(e.target.value))}
        className="mx-2 h-[2px] w-[130px] appearance-none bg-white [&::-webkit-slider-thumb]:h-[10px] [&::-webkit-slider-thumb]:w-[3px] [&::-webkit-slider-thumb]:appearance-none [&::-webkit-slider-thumb]:bg-white"
      />
      <button type="button" aria-label="放大" className="flex h-4 w-[7px] items-center" onClick={() => setZoom(Math.min(260, zoom + 10))}>
        <Svg w={6}><path d="M0 2h6v2H0zM2 0h2v6H2z" fill="#fff" /></Svg>
      </button>
      <div className="ml-[13px] flex h-5 w-[62px] border border-[#9aa3ad] bg-white">
        <input
          aria-label="显示比例数值"
          value={zoom}
          onChange={(e) => setZoom(Number(e.target.value) || 0)}
          className="w-0 flex-1 pl-[3px] text-[#222a36] outline-none"
        />
        <div className="flex w-[17px] flex-col">
          <button type="button" aria-label="增大比例" className="flex flex-1 items-center justify-center border border-[#b4b5b7] bg-[#efefef]" onClick={() => setZoom(zoom + 1)}>
            <Svg w={5} h={3}><path d="M0 3l2.500-3L5 3z" fill="#000" /></Svg>
          </button>
          <button type="button" aria-label="减小比例" className="flex flex-1 items-center justify-center border border-[#b4b5b7] bg-[#efefef]" onClick={() => setZoom(zoom - 1)}>
            <Svg w={5} h={3}><path d="M0 0l2.500 3L5 0z" fill="#000" /></Svg>
          </button>
        </div>
      </div>
      <span className="mr-[6px] ml-[11px] self-end">
        <Svg w={10}><path d="M8 0h2v2H8zM4 4h2v2H4zM8 4h2v2H8zM0 8h2v2H0zM4 8h2v2H4zM8 8h2v2H8z" fill="#9a9fa6" /></Svg>
      </span>
    </footer>
  );
}

/* Tiled outline lettering: the mask keeps only the rim of each letter's stroke. */
function Watermark() {
  return (
    <svg className="pointer-events-none absolute -inset-x-1 -top-1 bottom-0 z-20 h-[calc(100%+4px)] w-[calc(100%+8px)]" aria-hidden="true">
      <defs>
        <mask id="rim" maskUnits="userSpaceOnUse" x="0" y="0" width="264" height="264">
          <g transform="translate(107 106) rotate(-45)" fontFamily="Lato, sans-serif" fontSize="24" textAnchor="middle" fill="none" strokeLinejoin="round">
            <text y="9" stroke="#fff" strokeWidth="3.500">WWW.WEIDOWN.COM</text>
            <text y="9" stroke="#777" strokeWidth="1.500">WWW.WEIDOWN.COM</text>
          </g>
        </mask>
        <pattern id="mark" width="264" height="264" patternUnits="userSpaceOnUse">
          <rect width="264" height="264" fill="#000" fillOpacity=".065" mask="url(#rim)" />
        </pattern>
      </defs>
      <rect width="100%" height="100%" fill="url(#mark)" />
    </svg>
  );
}

export default function App() {
  return (
    <div className="relative flex h-screen flex-col overflow-hidden rounded-t border-x-4 border-t-4 border-[#1167ab] bg-[#fafafa] font-['Noto_Sans_CJK_SC',sans-serif] text-xs text-[#252c38]">
      <Header />
      <Ribbon />
      <DocTabs />
      <main className="flex min-h-0 flex-1">
        <ToolStrip items={leftTools} />
        <div className="w-[3px] shrink-0 bg-[#bcbcbe]" />
        <VerticalRuler />
        <div className="flex min-w-0 flex-1 flex-col items-center overflow-hidden">
          <HorizontalRuler />
          <Page />
        </div>
        <ScrollBar />
        <div className="w-[3px] shrink-0 bg-[#bcbcbe]" />
        <ToolStrip items={rightTools} />
      </main>
      <StatusBar />
      <Watermark />
    </div>
  );
}
